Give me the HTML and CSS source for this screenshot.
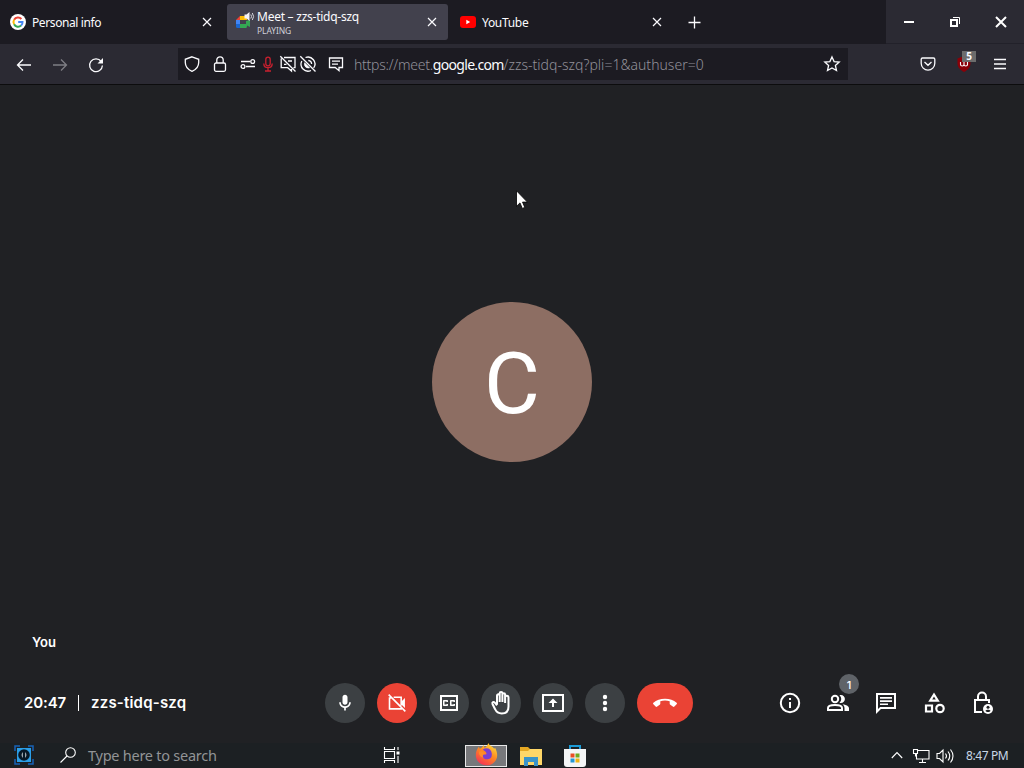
FILE: index.html
```html
<!DOCTYPE html>
<html lang="en">
<head>
    <meta charset="UTF-8">
    <meta name="viewport" content="width=device-width, initial-scale=1.0">
    <title>Meet – zzs-tidq-szq</title>
    <link rel="stylesheet" href="styles.css">
</head>
<body>
  <div class="tabbar">
    <div class="tab">
      <svg class="favicon" viewBox="0 0 16 16">
        <circle cx="8" cy="8" r="8" fill="#fff"/>
        <g fill="none" stroke-width="2">
          <path d="M4.1 5.7A4.5 4.5 0 0 1 11.4 5" stroke="#ea4335"/>
          <path d="M4.1 5.7a4.5 4.5 0 0 0 0 4.6" stroke="#fbbc05"/>
          <path d="M4.1 10.3a4.5 4.5 0 0 0 7 1.3" stroke="#34a853"/>
          <path d="M11.1 11.6A4.5 4.5 0 0 0 12.5 8.1H8.2" stroke="#4285f4"/>
        </g>
      </svg>
      <div class="tab-text"><span class="t-personal">Personal info</span></div>
      <svg class="close" viewBox="0 0 16 16"><path d="M4 4l8 8M12 4l-8 8"/></svg>
    </div>
    <div class="tab active">
      <svg class="favicon wide" viewBox="0 0 20 18">
        <path d="M1 8l4-4v4z" fill="#ea4335"/>
        <path d="M5 4h7v4H5z" fill="#fbbc04"/>
        <path d="M1 8h4v5H1z" fill="#4285f4"/>
        <path d="M1 12h4v4H2.500a1.500 1.500 0 0 1-1.500-1.500z" fill="#1967d2"/>
        <path d="M5 12h6V9l4-1v7l-3-1.500q0 2.500-1 2.500H5z" fill="#34a853"/>
        <path d="M9.500 2.500H11.500L14.500 0v9L11.500 6.500H9.500z" fill="#f4f4f8"/>
        <path d="M15.800 2.500q1.500 2 0 4M17.300 1q2.600 3.500 0 7" fill="none" stroke="#d6d6dd" stroke-width="1"/>
      </svg>
      <div class="tab-text"><span class="t-meet">Meet – zzs-tidq-szq</span><small>PLAYING</small></div>
      <svg class="close" viewBox="0 0 16 16"><path d="M4 4l8 8M12 4l-8 8"/></svg>
    </div>
    <div class="tab">
      <svg class="favicon" viewBox="0 0 16 16">
        <rect y="2" width="16" height="12" rx="3" fill="#f00"/>
        <path d="M6.300 5.800v4.400L10.200 8z" fill="#fff"/>
      </svg>
      <div class="tab-text"><span class="t-youtube">YouTube</span></div>
      <svg class="close" viewBox="0 0 16 16"><path d="M4 4l8 8M12 4l-8 8"/></svg>
    </div>
    <svg class="newtab" viewBox="0 0 16 16"><path d="M8.500 2.500v12M2.500 8.500h12"/></svg>
    <div class="window-buttons">
      <svg viewBox="0 0 16 16"><path d="M3 8h10" stroke-width="2"/></svg>
      <svg viewBox="0 0 16 16"><path d="M4 6h6v6H4z" stroke-width="2"/><path d="M6 3.500h6.500V10" stroke-width="1"/></svg>
      <svg viewBox="0 0 16 16"><path d="M3 3l10 10M13 3L3 13" stroke-width="2"/></svg>
    </div>
  </div>

  <div class="toolbar">
    <div class="nav">
      <svg viewBox="0 0 16 16"><path d="M15 8H1.500M7 2.500L1.500 8 7 13.500"/></svg>
      <svg class="disabled" viewBox="0 0 16 16"><path d="M1 8h13.500M9 2.500L14.500 8 9 13.500"/></svg>
      <svg viewBox="0 0 16 16"><path d="M13.200 4.500A6.400 6.400 0 1 0 14.400 8.500"/><path d="M15 1v5.500H9.500z" fill="#fbfbfe" stroke="none"/></svg>
    </div>
    <div class="urlbar">
      <svg class="w28" viewBox="0 0 16 16"><path d="M8 .8l6.700 2.500v3.200c0 4-2.500 7-6.700 8.800-4.200-1.800-6.700-4.800-6.700-8.800V3.300z"/></svg>
      <svg class="w28" viewBox="0 0 16 16"><rect x="2.500" y="7" width="11" height="8.300" rx="1.500"/><path d="M4.800 7V4a3.200 3.200 0 0 1 6.400 0v3"/></svg>
      <svg class="w20 first" viewBox="0 0 16 16"><path d="M1 5.500h9M6 10.500h9"/><circle cx="12.700" cy="5.500" r="1.900"/><circle cx="3" cy="10.500" r="1.900"/></svg>
      <svg class="w20 rec" viewBox="0 0 16 16"><rect x="5.800" y="1.200" width="4.400" height="8.600" rx="2.200"/><path d="M3.800 7.500c0 5.600 8.400 5.600 8.400 0M8 11.800V15M5 15h6"/></svg>
      <svg class="w20" viewBox="0 0 16 16"><path d="M4 1.500h11v10.200h-1.500M11.500 13v2l-3.800-3.300H1.200V2.500M8 5h4M4 8.300h2.500M.3.3l15.200 15.200"/></svg>
      <svg class="w20" viewBox="0 0 16 16"><path d="M5.500 1.500a7 7 0 0 1 8.200 10.500M11 14.500A7 7 0 0 1 1.800 5M.3.300l15.200 15.200M8.300 4.500a3.600 3.600 0 0 1 3.300 3.500"/><path d="M4.800 7.500l4 4A3.500 3.500 0 0 1 4.800 7.500z" fill="#fbfbfe"/></svg>
      <svg class="w28 notes" viewBox="0 0 16 16"><path d="M1.500 2h13v9.500H11v3.200l-3.800-3.200H1.500zM4 5.200h8M4 8.200h6"/></svg>
      <div class="url">https://meet.<b>google.com</b><span>/zzs-tidq-szq?pli=1&amp;authuser=0</span></div>
      <svg class="star" viewBox="0 0 16 16"><path d="M8 .9l2.100 4.700 5.100.5-3.800 3.400 1.100 5L8 12l-4.500 2.500 1.100-5L.8 6.100l5.100-.5z"/></svg>
    </div>
    <div class="extensions">
      <svg viewBox="0 0 16 16"><path d="M2.500 2h11q1.300 0 1.300 1.300v4a6.800 6.800 0 0 1-13.600 0v-4Q1.200 2 2.500 2zM4.500 6L8 9.300 11.500 6"/></svg>
      <div class="ublock">
        <svg viewBox="0 0 16 16"><path d="M8 0l6.500 2.500v5C14.500 11 12 14 8 16 4 14 1.500 11 1.500 7.500v-5z" fill="#8a0008" stroke="none"/><path d="M4.500 6v2.500c0 2 3.500 2 3.500 0V6M8 8.500c0 2 3.500 2 3.500 0V6" stroke-width="1.100"/></svg>
        <span>5</span>
      </div>
      <svg viewBox="0 0 16 16"><path d="M2 3.500h12M2 8h12M2 12.500h12"/></svg>
    </div>
  </div>

  <div class="meet">
    <div class="stage">
      <div class="avatar">C</div>
      <div class="you">You</div>
      <svg class="cursor" viewBox="0 0 13 20"><path d="M.5.800v15.500l3.500-3.400 2.300 5.500 2.500-1-2.300-5.300h4.900z" fill="#fff" stroke="#000" stroke-width=".8"/></svg>
    </div>
    <div class="controls">
      <div class="meeting"><span class="clock">20:47</span><i></i><span class="code">zzs-tidq-szq</span></div>
      <div class="buttons">
        <div class="btn"><svg class="s20" viewBox="0 0 24 24"><path d="M12 14c1.700 0 3-1.300 3-3V5c0-1.700-1.300-3-3-3S9 3.300 9 5v6c0 1.700 1.300 3 3 3zM17 11c0 2.800-2.200 5-5 5s-5-2.200-5-5H5c0 3.500 2.600 6.400 6 6.900V21h2v-3.100c3.400-.5 6-3.400 6-6.900z"/></svg></div>
        <div class="btn red"><svg class="s20" viewBox="0 0 24 24"><path d="M5 6H3v13h14v-1M8 5h9v10M2 2l20 20" fill="none" stroke="#fff" stroke-width="1.900"/><path d="M17 10.500l4.500-4.500v12L17 13.500z"/></svg></div>
        <div class="btn"><svg viewBox="0 0 24 24"><path d="M4 5h16v14H4z" fill="none" stroke="#fff" stroke-width="2"/><path d="M11 11H9.500v-.5h-2v3h2V13H11v1c0 .6-.4 1-1 1H7c-.6 0-1-.4-1-1v-4c0-.6.4-1 1-1h3c.6 0 1 .4 1 1zM18 11h-1.500v-.5h-2v3h2V13H18v1c0 .6-.4 1-1 1h-3c-.6 0-1-.4-1-1v-4c0-.6.4-1 1-1h3c.6 0 1 .4 1 1z"/></svg></div>
        <div class="btn"><svg viewBox="0 0 24 24"><path d="M8 13.500V4.700a1.300 1.300 0 0 1 2.700 0V11M10.700 11V2.300a1.300 1.300 0 0 1 2.700 0V11M13.400 11V3.600a1.300 1.300 0 0 1 2.700 0V12M16.100 12V6.400a1.500 1.500 0 0 1 3.400 0V15.500c0 4.500-2.600 7-6.800 7-3.700 0-5.400-1.700-6.600-4.300L3.500 13c-.7-1.700 1.100-2.700 2.300-1.300l2.200 2.600" fill="none" stroke="#fff" stroke-width="2"/></svg></div>
        <div class="btn"><svg viewBox="0 0 24 24"><path d="M2 4h20v16H2z" fill="none" stroke="#fff" stroke-width="2"/><path d="M12 7.500l-4.500 4.500H11v4h2v-4h3.500z"/></svg></div>
        <div class="btn"><svg viewBox="0 0 24 24"><circle cx="12" cy="6" r="2.200"/><circle cx="12" cy="12" r="2.200"/><circle cx="12" cy="18" r="2.200"/></svg></div>
        <div class="btn red hangup"><svg viewBox="0 0 24 24"><path d="M12 7.800c-4.600 0-8.700 1.500-11.600 4-.5.400-.5 1 0 1.500l2.200 2.200c.5.500 1.100.5 1.600.100l2.500-1.900c.4-.3.600-.6.600-1V10.200c1.500-.5 3.100-.7 4.700-.7s3.200.2 4.700.7v2.500c0 .4.200.7.600 1l2.500 1.900c.5.400 1.100.4 1.600-.1l2.200-2.200c.5-.5.500-1.100 0-1.500-2.900-2.500-7-4-11.600-4z"/></svg></div>
      </div>
      <div class="panels">
        <div class="panel"><svg viewBox="0 0 24 24"><circle cx="12" cy="12" r="9.200" fill="none" stroke="#fff" stroke-width="2"/><path d="M11 7h2v2h-2zM11 11h2v6h-2z"/></svg></div>
        <div class="panel"><svg viewBox="0 0 24 24"><g fill="none" stroke="#fff" stroke-width="2"><circle cx="9" cy="8" r="3.200"/><path d="M2 19v-2c0-4 14-4 14 0v2z"/></g><path d="M13.500 11.800a5 5 0 0 0 0-7.600c3-.9 5.400 1.200 5.400 3.800s-2.400 4.700-5.400 3.800zM16.500 13.200c3.500.5 6.500 1.800 6.500 4V20h-4.500v-3c0-1.600-.8-2.800-2-3.800z"/></svg><span class="badge">1</span></div>
        <div class="panel"><svg viewBox="0 0 24 24"><path d="M3 3h18v14H6.500L3 20.500z" fill="none" stroke="#fff" stroke-width="2"/><path d="M6 6h12v1.700H6zM6 9.200h12v1.700H6zM6 12.400h8v1.700H6z"/></svg></div>
        <div class="panel"><svg viewBox="0 0 24 24"><path d="M12 3.500l3.800 6.200H8.200zM4 14.500h6V20.500H4z" fill="none" stroke="#fff" stroke-width="2.200"/><circle cx="18" cy="17.500" r="3.700" fill="none" stroke="#fff" stroke-width="2.200"/></svg></div>
        <div class="panel"><svg viewBox="0 0 24 24"><path d="M12 21H5V9h14v3M8 9V5.500a4 4 0 0 1 8 0V9" fill="none" stroke="#fff" stroke-width="2"/><circle cx="18" cy="18" r="5"/><circle cx="18" cy="16.200" r="1.500" fill="#202124"/><path d="M15.300 19.800c1.200-1.500 4.200-1.500 5.400 0-1.200 1.600-4.200 1.600-5.400 0z" fill="#202124"/></svg></div>
      </div>
    </div>
  </div>

  <div class="taskbar">
    <svg class="start" viewBox="0 0 20 20"><path d="M1 6V1h5M14 1h5v5M19 14v5h-5M6 19H1v-5" fill="none" stroke="#1762b8" stroke-width="1.500"/><path d="M3 3h14v14H3z" fill="#2b9fe8"/><circle cx="10" cy="10" r="5.800" fill="#071827"/><path d="M9 7q-3 3 0 6zM11 7q3 3 0 6z" fill="#9aa5ad"/></svg>
    <svg class="search" viewBox="0 0 16 16"><circle cx="10.500" cy="5.500" r="4.800"/><path d="M7 9L.5 15.500"/></svg>
    <span class="placeholder">Type here to search</span>
    <svg class="taskview" viewBox="0 0 17 16"><path d="M1.500 0v2.500h10V0M1.500 16v-2.500h10V16M1.500 4.500h10v7h-10zM15 0v3M15 9v7"/><path d="M13.500 4.500h3v3h-3z" fill="#fff" stroke="none"/></svg>
    <div class="firefox">
      <svg viewBox="0 0 24 24">
        <defs><linearGradient id="fox" x1=".8" y1="0" x2=".2" y2="1"><stop offset="0" stop-color="#ffe23e"/><stop offset=".45" stop-color="#ff8a20"/><stop offset="1" stop-color="#f52c5a"/></linearGradient></defs>
        <path d="M14 0c1 3 4 3 6 6l1-1c3 6 3 11-1 15-5 5-13 4-17-1C0 15 0 9 4 4l1 2c2-1 3-2 4-4l1 3c2-1 3-3 4-5z" fill="url(#fox)"/>
        <path d="M8 7c4-3 9-1 9.500 4s-2.500 6-5.500 6-5-3-4-5l3 0c2 0 1-3-3-5z" fill="#7a3fd0"/>
        <path d="M4 9c3-1 5 0 7 2.500-2 0-4 1.500-2 4-3-.5-5-2.500-5-6.500z" fill="#ff8c28"/>
      </svg>
    </div>
    <svg class="folder" viewBox="0 0 22 20"><path d="M0 1h8l2 2h11v16H0z" fill="#e5a823"/><path d="M0 5h8l2-2h12v16H0z" fill="#ffd768"/><path d="M4 20v-9h14v9h-4v-4H8v4z" fill="#3b94c8"/></svg>
    <svg class="store" viewBox="0 0 24 24"><path d="M7 6V2h10v4" fill="none" stroke="#1b9bd7" stroke-width="2"/><path d="M1 5h22v15q0 3-3 3H4q-3 0-3-3z" fill="#f3f5f6"/><path d="M7.500 9.500H11.500v4h-4z" fill="#e94e25"/><path d="M12.500 9.500h4v4h-4z" fill="#71a91f"/><path d="M7.500 14.500h4v4h-4z" fill="#2497d4"/><path d="M12.500 14.500h4v4h-4z" fill="#efb416"/></svg>
    <div class="tray">
      <svg class="up" viewBox="0 0 12 12"><path d="M.8 8L6 2.500 11.200 8"/></svg>
      <svg class="net" viewBox="0 0 17 16"><path d="M5 2.500h11v8.500H3.500V6M6 14.500h7M9.500 11v3.500M.5 1.500h4v4h-4zM2.500 5.500v3"/></svg>
      <svg class="vol" viewBox="0 0 18 16"><path d="M1 5.500h2.500L7 2v12l-3.500-3.500H1zM9.500 5.500q2 2.500 0 5M12 3.500q3.500 4.500 0 9M14.500 1.500q5 6.500 0 13"/></svg>
      <span>8:47 PM</span>
    </div>
  </div>
</body>
</html>
```

FILE: styles.css
```css
* {
  box-sizing: border-box;
}

body {
  margin: 0;
  width: 1024px;
  height: 768px;
  overflow: hidden;
  display: flex;
  flex-direction: column;
  background-color: #202124;
  font-family: "Noto Sans", "Open Sans", sans-serif;
  color: #fbfbfe;
}

svg {
  display: block;
  flex: none;
  overflow: visible;
}

/* tabs */
.tabbar {
  height: 44px;
  display: flex;
  align-items: center;
  gap: 4px;
  padding-left: 2px;
  background-color: #1c1b22;
}

.tab {
  width: 221px;
  height: 36px;
  display: flex;
  align-items: center;
  padding: 0 8px;
  border-radius: 3px;
}

.tab.active {
  background-color: #42414d;
}

.favicon {
  width: 16px;
  height: 16px;
}

.favicon.wide {
  width: 20px;
  height: 18px;
  margin-right: -4px;
  margin-bottom: 2px;
}

.tab-text {
  flex: 1;
  margin-left: 6px;
  padding-top: 2px;
  font-size: 12px;
  line-height: 14px;
  white-space: nowrap;
}

.tab-text span,
.tab-text small {
  display: block;
}

.tab-text small {
  font-size: 8.5px;
  line-height: 13px;
  letter-spacing: -0.1px;
  color: #d0d0d7;
}

.t-personal {
  letter-spacing: -0.4px;
}

.t-meet {
  letter-spacing: -0.25px;
}

.t-youtube {
  letter-spacing: -0.3px;
}

.close {
  width: 16px;
  height: 16px;
}

.close path,
.newtab path {
  stroke: #fbfbfe;
  stroke-width: 1.2;
}

.newtab {
  width: 16px;
  height: 16px;
  margin-left: 9px;
}

.newtab path {
  stroke-width: 1.3;
}

.window-buttons {
  width: 138px;
  height: 44px;
  margin-left: auto;
  display: flex;
  align-items: center;
  background-color: #2b2a33;
  border-bottom: 1px solid #22212a;
}

.window-buttons svg {
  width: 46px;
  height: 16px;
  fill: none;
  stroke: #fff;
}

/* toolbar */
.toolbar {
  height: 41px;
  display: flex;
  align-items: center;
  padding: 0 6px;
  background-color: #2b2a33;
  border-bottom: 1px solid #0c0c0d;
}

.toolbar svg {
  width: 36px;
  height: 16px;
  fill: none;
  stroke: #fbfbfe;
  stroke-width: 1.3;
}

.nav,
.extensions {
  display: flex;
}

.nav {
  padding-top: 1px;
}

.nav .disabled {
  opacity: 0.4;
}

.urlbar {
  width: 670px;
  height: 32px;
  margin-left: 64px;
  display: flex;
  align-items: center;
  background-color: #1c1b22;
}

.urlbar .w28 {
  width: 28px;
}

.urlbar .w20 {
  width: 20px;
}

.urlbar .first {
  margin-left: 4px;
}

.urlbar .rec {
  stroke: #c8202f;
}

.urlbar .notes {
  margin-left: 4px;
  margin-right: 4px;
}

.url {
  flex: 1;
  padding-top: 2px;
  font-size: 14px;
  line-height: 20px;
  font-weight: 300;
  letter-spacing: -0.25px;
  white-space: nowrap;
  color: #92919a;
}

.url b {
  font-weight: 400;
  letter-spacing: -0.7px;
  color: #fbfbfe;
}

.url span {
  letter-spacing: 0.02px;
}

.urlbar .star {
  width: 32px;
}

.extensions {
  margin-left: auto;
}

.ublock {
  position: relative;
}

.ublock span {
  position: absolute;
  left: 16px;
  top: -5px;
  width: 14px;
  height: 11px;
  background-color: #6c6c6c;
  font-size: 10px;
  font-weight: 700;
  line-height: 11px;
  text-align: center;
}

/* call */
.meet {
  height: 658px;
  display: flex;
  flex-direction: column;
  background-color: #202124;
  color: #fff;
}

.stage {
  position: relative;
  height: 578px;
  display: flex;
  flex-direction: column;
  align-items: center;
  padding-top: 217px;
}

.avatar {
  width: 160px;
  height: 160px;
  border-radius: 50%;
  background-color: #8d6e63;
  font-family: Roboto, sans-serif;
  font-size: 86px;
  line-height: 163px;
  text-align: center;
}

.you {
  align-self: flex-start;
  margin: 170px 0 0 32px;
  font-family: Inter, sans-serif;
  font-size: 13px;
  font-weight: 600;
  line-height: 20px;
}

.cursor {
  position: absolute;
  left: 516px;
  top: 105px;
  width: 13px;
  height: 20px;
}

.controls {
  height: 80px;
  display: flex;
  align-items: center;
  font-family: Inter, sans-serif;
}

.controls svg {
  width: 24px;
  height: 24px;
  fill: #fff;
}

.controls .s20 {
  width: 20px;
  height: 20px;
}

.meeting {
  width: 325px;
  padding-left: 24px;
  display: flex;
  align-items: center;
  font-size: 15px;
  font-weight: 600;
}

.meeting i {
  width: 1px;
  height: 16px;
  margin: 0 12px;
  background-color: #fff;
}

.clock {
  width: 42px;
  letter-spacing: -0.1px;
  white-space: nowrap;
}

.meeting span {
  padding-bottom: 1px;
}

.code {
  letter-spacing: 0.2px;
}

.buttons {
  display: flex;
  gap: 12px;
}

.btn {
  width: 40px;
  height: 40px;
  display: flex;
  align-items: center;
  justify-content: center;
  border-radius: 20px;
  background-color: #3c4043;
}

.btn.red {
  background-color: #ea4335;
}

.btn.hangup {
  width: 56px;
}

.panels {
  display: flex;
  margin-left: 73px;
}

.panel {
  position: relative;
  width: 48px;
  height: 48px;
  display: flex;
  align-items: center;
  justify-content: center;
}

.badge {
  position: absolute;
  left: 25px;
  top: -5px;
  width: 20px;
  height: 20px;
  border-radius: 50%;
  background-color: #5f6368;
  font-size: 11px;
  font-weight: 500;
  line-height: 22px;
  text-align: center;
}

/* taskbar */
.taskbar {
  height: 25px;
  display: flex;
  align-items: center;
  padding-left: 14px;
  background-color: #1c2023;
}

.taskbar svg {
  fill: none;
  stroke-width: 1.1;
}

.start {
  width: 20px;
  height: 20px;
  margin-bottom: 2px;
}

.search {
  width: 16px;
  height: 16px;
  margin-left: 26px;
  margin-bottom: 1px;
  stroke: #fff;
}

.placeholder {
  width: 295px;
  margin-left: 12px;
  padding-bottom: 2px;
  font-size: 14.5px;
  line-height: 20px;
  letter-spacing: -0.25px;
  white-space: nowrap;
  color: #929496;
}

.taskview {
  width: 17px;
  height: 16px;
  margin-bottom: 2px;
  stroke: #fff;
}

.firefox {
  width: 42px;
  height: 22px;
  margin-left: 65px;
  display: flex;
  align-items: center;
  justify-content: center;
  border: 1px solid #e8e8e8;
  background-color: #77787b;
}

.firefox svg {
  width: 23px;
  height: 23px;
  margin-bottom: 2px;
}

.folder {
  width: 22px;
  height: 20px;
  margin-left: 13px;
}

.store {
  width: 24px;
  height: 24px;
  margin-left: 21px;
}

.tray {
  display: flex;
  align-items: center;
  margin-left: auto;
  padding-right: 15px;
  font-size: 12px;
  white-space: nowrap;
  color: #c9d7e6;
}

.tray svg {
  stroke: #fff;
}

.tray .up {
  width: 12px;
  height: 12px;
}

.tray .net {
  width: 17px;
  height: 16px;
  margin-left: 10px;
}

.tray .vol {
  width: 18px;
  height: 16px;
  margin: 0 12px 0 6px;
}

.tray span {
  width: 43px;
  letter-spacing: -0.4px;
}
```
